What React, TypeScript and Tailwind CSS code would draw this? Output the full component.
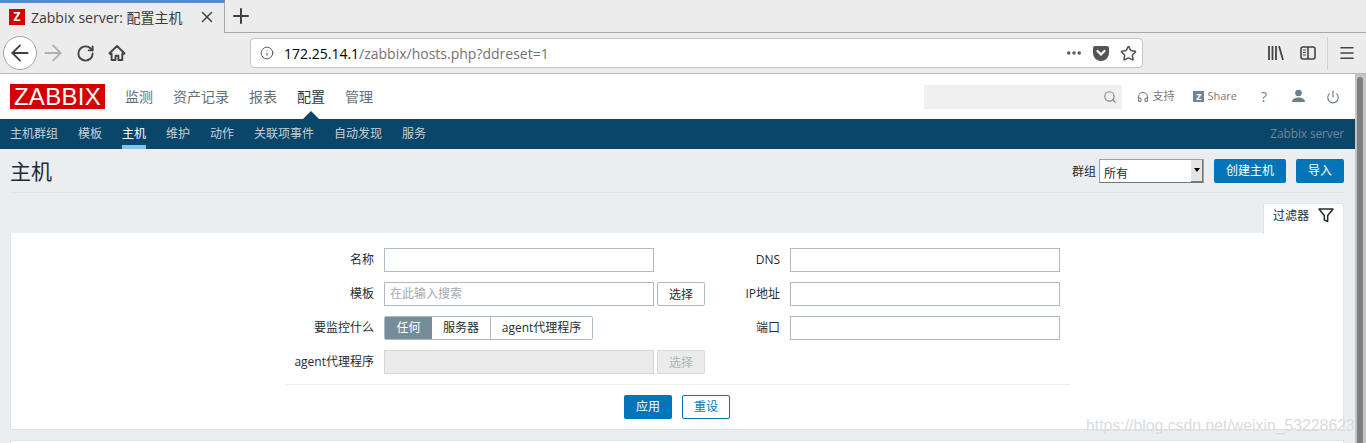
import { Search, Headphones, Power, RotateCw, Info, MoreHorizontal, Star, Plus, X, ArrowLeft, ArrowRight, Menu } from 'lucide-react';

const cjk = 'font-["Open_Sans","Noto_Sans_CJK_SC",sans-serif]';

const mainNav = ['监测', '资产记录', '报表', '配置', '管理'];
const subNav = ['主机群组', '模板', '主机', '维护', '动作', '关联项事件', '自动发现', '服务'];

function BrowserChrome() {
  return (
    <div className="bg-[#ececec] text-[#3b3b3b]">
      {/* Tabs */}
      <div className="h-[33px] flex items-stretch">
        <div className="w-[225px] border-t-[3px] border-[#4f8fd0] flex items-center pl-[9px] pr-[8px] pb-[2px] border-r border-r-[#a8a8a8]">
          <div className="w-[16px] h-[16px] bg-[#d40000] text-white text-[12px] font-bold flex items-center justify-center leading-none">Z</div>
          <span className="ml-[6px] text-[14px] whitespace-nowrap flex-1">Zabbix server: 配置主机</span>
          <X size={18} strokeWidth={2} className="text-[#444]" />
        </div>
        <div className="flex-1 border-b border-[#a8a8a8] flex items-center pl-[4px]">
          <Plus size={24} strokeWidth={2} className="text-[#3f3f3f]" />
        </div>
      </div>
      {/* Toolbar */}
      <div className="h-[41px] border-b border-[#b5b5b5] flex items-center relative">
        <div className="ml-[3px] w-[34px] h-[34px] rounded-full bg-white border border-[#a8a8a8] flex items-center justify-center">
          <ArrowLeft size={26} strokeWidth={1.7} className="text-[#404040]" />
        </div>
        <ArrowRight size={26} strokeWidth={1.7} className="ml-[3px] text-[#b0b0b0]" />
        <RotateCw size={19} strokeWidth={2.4} className="ml-[10px] text-[#444]" />
        <svg width="18" height="18" viewBox="0 0 18 18" className="ml-[13px] text-[#444]">
          <path d="M9 2 1.500 9.200l1.200 1.100.9-.8V16h3.900v-4.200h2.900V16h3.900V9.500l.9.800 1.200-1.100z" fill="none" stroke="currentColor" strokeWidth="1.900" strokeLinejoin="round" />
        </svg>
        <div className="ml-[124px] w-[893px] h-[30px] bg-white rounded-[4px] border border-[#c4c4c4] flex items-center pl-[9px] pr-[5px]">
          <Info size={14} strokeWidth={1.6} className="text-[#555]" />
          <span className="ml-[10px] text-[14px] whitespace-nowrap text-black">172.25.14.1<span className="text-[#737373]">/zabbix/hosts.php?ddreset=1</span></span>
          <div className="flex-1" />
          <MoreHorizontal size={18} strokeWidth={2.6} className="text-[#555]" />
          <svg width="16" height="15" viewBox="0 0 16 15" className="ml-[10px]">
            <path d="M2 0h12a2 2 0 0 1 2 2v5a8 8 0 0 1-16 0V2a2 2 0 0 1 2-2z" fill="#555" />
            <path d="M4.500 5 8 8.500 11.500 5" fill="none" stroke="#fff" strokeWidth="2.200" strokeLinecap="round" />
          </svg>
          <Star size={17} strokeWidth={2.2} className="ml-[11px] text-[#555]" />
        </div>
        <div className="flex-1" />
        <svg width="16" height="14" viewBox="0 0 16 14" className="mr-[16px] text-[#444]">
          <path d="M1 0v14M4.500 0v14M8 0v14M11 0l4 14" stroke="currentColor" strokeWidth="1.800" fill="none" />
        </svg>
        <svg width="16" height="14" viewBox="0 0 16 14" className="mr-[11px] text-[#444]">
          <rect x="1" y="1" width="14" height="12" rx="2" fill="none" stroke="currentColor" strokeWidth="1.600" />
          <path d="M8 1v12" stroke="currentColor" strokeWidth="1.600" />
          <path d="M3 4h3M3 6.500h3M3 9h3" stroke="currentColor" strokeWidth="1" />
        </svg>
        <div className="w-px h-[33px] bg-[#d2d2d2] mr-[10px]" />
        <Menu size={18} strokeWidth={2.2} className="mr-[10px] text-[#444]" />
      </div>
    </div>
  );
}

function TopNav() {
  return (
    <div className="h-[45px] bg-white flex items-center pl-[10px] pr-[15px]">
      <div className="w-[95px] h-[25px] bg-[#d40000] text-white text-[24px] leading-[25px] text-center tracking-[0.3px] font-['Liberation_Sans',sans-serif]">ZABBIX</div>
      <div className="flex ml-[20px] gap-[20px] text-[14px] text-[#666f75]">
        {mainNav.map((m) => (
          <div key={m} className={`relative ${m === '配置' ? 'text-[#2d3a42]' : ''}`}>
            {m}
            {m === '配置' && (
              <div className="absolute left-[6px] top-[25px] w-0 h-0 border-x-[8px] border-x-transparent border-b-[8px] border-b-[#0a466a]" />
            )}
          </div>
        ))}
      </div>
      <div className="flex-1" />
      <div className="w-[198px] h-[24px] bg-[#f0f0f0] flex items-center justify-end pr-[5px]">
        <Search size={14} strokeWidth={2} className="text-[#7c8a93]" />
      </div>
      <div className="ml-[15px] flex items-center text-[11px] text-[#6f7d87]">
        <Headphones size={12} strokeWidth={2.2} />
        <span className="ml-[3px]">支持</span>
      </div>
      <div className="ml-[19px] flex items-center text-[11px] text-[#6f7d87]">
        <div className="w-[11px] h-[11px] bg-[#6f8594] text-white text-[9px] font-bold leading-[11px] text-center">Z</div>
        <span className="ml-[3px]">Share</span>
      </div>
      <span className="ml-[22px] w-[10px] text-[14px] text-[#6f7d87] text-center">?</span>
      <svg width="15" height="15" viewBox="0 0 15 15" className="ml-[22px]">
        <circle cx="7.500" cy="4" r="3.300" fill="#6f7d87" />
        <path d="M1 13c0-3 3-4.500 6.500-4.500S14 10 14 13z" fill="#6f7d87" />
      </svg>
      <Power size={14} strokeWidth={2} className="ml-[20px] text-[#6f7d87]" />
    </div>
  );
}

function SubNav() {
  return (
    <div className="h-[30px] bg-[#0a466a] flex pl-[10px] pr-[11px] text-[12px] text-[#c3d0d9]">
      <div className="flex gap-[20px]">
        {subNav.map((s) => (
          <div key={s} className={`h-[30px] leading-[29px] ${s === '主机' ? 'text-white border-b-[4px] border-[#7fc5f2]' : ''}`}>
            {s}
          </div>
        ))}
      </div>
      <div className="flex-1" />
      <div className="leading-[30px] text-[#6c8698] tracking-[-0.15px]">Zabbix server</div>
    </div>
  );
}

function PrimaryBtn({ text, className }: { text: string; className: string }) {
  return <div className={`h-[24px] bg-[#0275b8] text-white text-[12px] leading-[23px] text-center rounded-[2px] ${className}`}>{text}</div>;
}

function Row({ label, children }: { label: string; children: React.ReactNode }) {
  return (
    <div className="flex items-center h-[24px]">
      <div className="w-[89px] text-right text-[12px] text-[#1f2c33] whitespace-nowrap">{label}</div>
      <div className="ml-[10px] flex">{children}</div>
    </div>
  );
}

function Input({ placeholder }: { placeholder?: string }) {
  return (
    <div className="w-[270px] h-[24px] bg-white border border-[#acbbc7] px-[5px] text-[12px] leading-[22px] text-[#a3a9ad]">{placeholder}</div>
  );
}

function FilterForm() {
  return (
    <div className="w-[785px] ml-[274px] pt-[15px]">
      <div className="flex">
        <div className="w-[420px] flex flex-col gap-[10px]">
          <Row label="名称"><Input /></Row>
          <Row label="模板">
            <Input placeholder="在此输入搜索" />
            <div className="ml-[3px] w-[48px] h-[24px] border border-[#acbbc7] rounded-[2px] text-[12px] leading-[23px] text-center text-[#1f2c33]">选择</div>
          </Row>
          <Row label="要监控什么">
            <div className="flex h-[24px] border border-[#acbbc7] rounded-[2px] text-[12px] leading-[22px] text-[#1f2c33]">
              <div className="w-[47px] bg-[#768d99] text-white text-center">任何</div>
              <div className="w-[59px] border-r border-[#acbbc7] text-center">服务器</div>
              <div className="w-[101px] text-center">agent代理程序</div>
            </div>
          </Row>
          <Row label="agent代理程序">
            <div className="w-[270px] h-[24px] bg-[#ebebeb] border border-[#d0d8de]" />
            <div className="ml-[3px] w-[48px] h-[24px] bg-[#ebebeb] border border-[#d5dde2] rounded-[2px] text-[12px] leading-[23px] text-center text-[#acb5ba]">选择</div>
          </Row>
        </div>
        <div className="flex flex-col gap-[10px]">
          {['DNS', 'IP地址', '端口'].map((l) => (
            <div key={l} className="flex items-center h-[24px]">
              <div className="w-[75px] text-right text-[12px] text-[#1f2c33]">{l}</div>
              <div className="ml-[10px]"><Input /></div>
            </div>
          ))}
        </div>
      </div>
      <div className="mt-[10px] border-t border-[#ebeef0] pt-[10px] flex justify-center gap-[10px] pr-[1px]">
        <PrimaryBtn text="应用" className="w-[48px]" />
        <div className="w-[48px] h-[24px] border border-[#0275b8] rounded-[2px] text-[12px] leading-[22px] text-center text-[#0275b8]">重设</div>
      </div>
    </div>
  );
}

function Content() {
  return (
    <div className="h-[294px] bg-[#ebeef0] px-[10px] overflow-hidden">
      <div className="h-[44px] border-b border-[#dfe4e7] flex items-center pr-[1px]">
        <div className="text-[21px] text-[#1f2c33] mt-[3px]">主机</div>
        <div className="flex-1" />
        <span className="text-[12px] text-[#1f2c33] mt-[3px]">群组</span>
        <div className="ml-[3px] w-[105px] h-[24px] bg-white border-[1px] border-[#9aa2a8] border-b-[#777] flex text-[12px] text-[#1f2c33]">
          <span className="pl-[4px] leading-[27px] flex-1">所有</span>
          <div className="w-[12px] bg-[#e4e4e4] border-r border-b border-[#777] flex items-center justify-center">
            <div className="w-0 h-0 border-x-[3px] border-x-transparent border-t-[4px] border-t-black" />
          </div>
        </div>
        <PrimaryBtn text="创建主机" className="ml-[10px] w-[72px]" />
        <PrimaryBtn text="导入" className="ml-[10px] w-[48px]" />
      </div>
      <div className="mt-[10px] flex justify-end pr-[1px]">
        <div className="w-[81px] h-[31px] bg-white border-t border-x border-[#dfe4e7] flex items-start pt-[3px] pl-[9px] text-[12px] text-[#1f2c33] rounded-t-[2px]">
          过滤器
          <svg width="16" height="15" viewBox="0 0 16 15" className="ml-[9px] mt-[1px]">
            <path d="M1 1h14L9.700 7.500V13.500L6.300 11.800V7.500z" fill="none" stroke="#1f2c33" strokeWidth="1.500" strokeLinejoin="round" />
          </svg>
        </div>
      </div>
      <div className="h-[197px] bg-white border-x border-b border-[#dfe4e7] -mt-px mr-[1px]">
        <FilterForm />
      </div>
      <div className="mt-[10px] h-[4px] bg-white border border-[#dfe4e7] mr-[1px]" />
    </div>
  );
}

export default function App() {
  return (
    <div className={`${cjk} w-[1366px] h-[443px] overflow-hidden relative`}>
      <BrowserChrome />
      <div className="flex">
        <div className="w-[1355px]">
          <TopNav />
          <SubNav />
          <Content />
        </div>
        <div className="w-[11px] bg-[#c4c4c4] relative">
          <div className="absolute left-[2px] top-[3px] w-[6px] h-[370px] bg-[#7d7f7f] rounded-[3px]" />
        </div>
      </div>
      {/* watermark */}
      <div className="absolute left-[1086px] top-[414px] text-[15.8px] whitespace-nowrap text-[#d9dcde] font-['Liberation_Sans',sans-serif]">https://blog.csdn.net/weixin_53228623</div>
    </div>
  );
}
